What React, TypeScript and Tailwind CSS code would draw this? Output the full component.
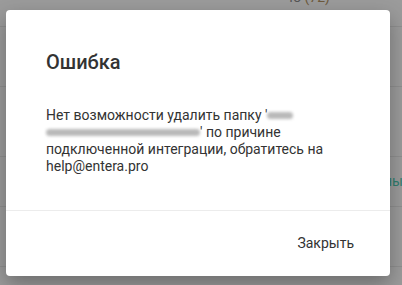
import React from "react";

const Blur: React.FC<{ w: number }> = ({ w }) => (
  <span
    className="inline-block h-[7px] bg-[#b9b9b9] blur-[1.5px] rounded-sm align-[1px]"
    style={{ width: w }}
  />
);

const App: React.FC = () => {
  return (
    <div className="relative w-[402px] h-[285px] overflow-hidden bg-[#9b9b9b] font-['Roboto',sans-serif]">
      {/* page behind the overlay */}
      <div className="flex flex-col">
        <div className="h-[27px] border-b border-[#8f8f8f] flex justify-end pr-[72px]">
          <span className="text-[14px] leading-[14px] -mt-[10px] text-[#555]">
            48 <span className="text-[#6e5a3c]">(72)</span>
          </span>
        </div>
        <div className="h-[60px] border-b border-[#8f8f8f]" />
        <div className="h-[70px] border-b border-[#8f8f8f]" />
        <div className="h-[50px] border-b border-[#8f8f8f] flex justify-end items-center">
          <span className="text-[14px] text-[#2f7d6e] -mr-[1px]">Активны</span>
        </div>
        <div className="h-[60px] border-b border-[#8f8f8f]" />
      </div>

      {/* modal */}
      <div className="absolute inset-0 flex items-center justify-center pr-[6px] pt-[1px]">
        <div className="w-[384px] h-[266px] bg-white rounded-[4px] shadow-[0_8px_20px_rgba(0,0,0,0.3)] flex flex-col">
          <div className="px-[40px] pt-[40px] pb-[35px]">
            <h2 className="text-[20px] leading-[24px] font-medium text-[#333]">Ошибка</h2>
            <p className="mt-[33px] text-[14px] leading-[17px] text-[#333]">
              Нет возможности удалить папку '<Blur w={26} />{" "}
              <Blur w={154} />' по причине подключенной интеграции, обратитесь на help@entera.pro
            </p>
          </div>
          <div className="border-t border-[#ececec] flex-1 flex items-center justify-end pr-[36px]">
            <button className="text-[14px] leading-[17px] text-[#333]">Закрыть</button>
          </div>
        </div>
      </div>
    </div>
  );
};

export default App;
